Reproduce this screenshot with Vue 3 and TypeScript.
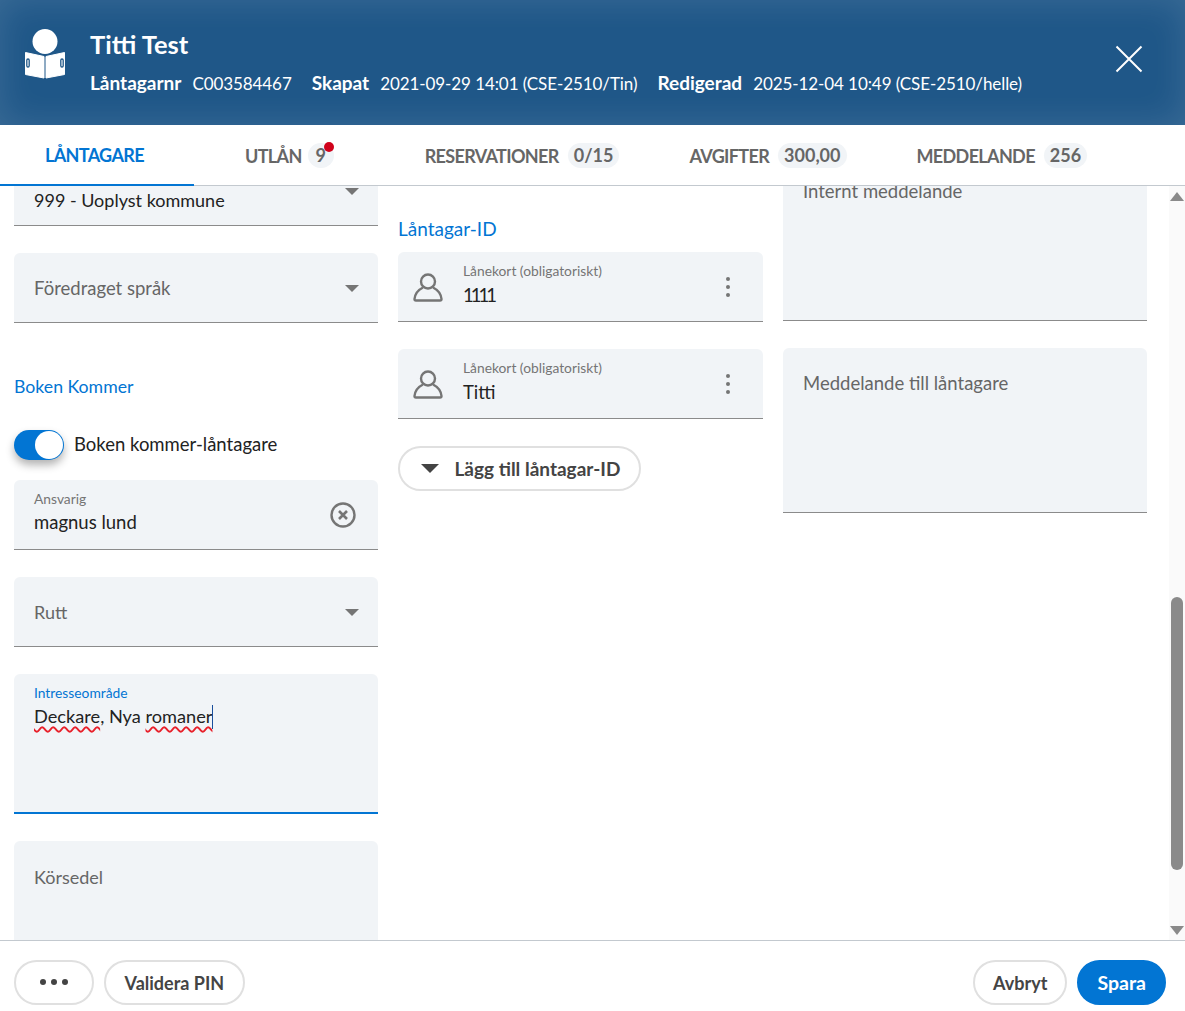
<template>
  <div class="page">
    <header class="top">
      <svg class="reader" width="44" height="50" viewBox="0 0 44 50">
        <circle cx="21" cy="12.500" r="12.500" fill="#fff" />
        <path d="M1.500 23.500 L20 27.500 V49 L1.500 45.500 Z M40.500 23.500 L22 27.500 V49 L40.500 45.500 Z" fill="#fff" stroke="#fff" stroke-width="1" stroke-linejoin="round" />
        <rect x="2.800" y="30" width="2.400" height="8" rx="1.200" fill="none" stroke="#1f5788" stroke-width="1.300" />
        <rect x="36.800" y="30" width="2.400" height="8" rx="1.200" fill="none" stroke="#1f5788" stroke-width="1.300" />
      </svg>
      <div class="who">
        <div class="name">Titti Test</div>
        <div class="meta">
          <template v-for="m in meta" :key="m.label">
            <b>{{ m.label }}</b><span>{{ m.value }}</span>
          </template>
        </div>
      </div>
      <svg class="close" width="28" height="28" viewBox="0 0 28 28">
        <path d="M1.500 1.500 L26.500 26.500 M26.500 1.500 L1.500 26.500" stroke="#fff" stroke-width="2" fill="none" />
      </svg>
    </header>

    <nav class="tabs">
      <div v-for="t in tabs" :key="t.label" class="tab" :class="t.cls">
        <span>{{ t.label }}</span>
        <span v-if="t.badge" class="badge">
          {{ t.badge }}<i v-if="t.dot" class="dot"></i>
        </span>
      </div>
    </nav>

    <main class="body">
      <div class="columns">
        <section class="col">
          <div class="field select">
            <span class="value first">999 - Uoplyst kommune</span>
            <i class="arrow"></i>
          </div>
          <div class="field select gap">
            <span class="ph">Föredraget språk</span>
            <i class="arrow"></i>
          </div>
          <h3 class="head boken">Boken Kommer</h3>
          <div class="switch-row">
            <span class="switch"><i></i></span>
            <span class="switch-label">Boken kommer-låntagare</span>
          </div>
          <div class="field labelled">
            <label>Ansvarig</label>
            <span class="value">magnus lund</span>
            <svg class="clear" width="28" height="28" viewBox="0 0 28 28">
              <circle cx="14" cy="14" r="11.500" fill="none" stroke="#757575" stroke-width="2.400" />
              <path d="M10 10 L18 18 M18 10 L10 18" stroke="#757575" stroke-width="2.600" fill="none" />
            </svg>
          </div>
          <div class="field select gap">
            <span class="ph short">Rutt</span>
            <i class="arrow"></i>
          </div>
          <div class="field labelled area gap focus">
            <label>Intresseområde</label>
            <span class="value"><u>Deckare</u>, Nya <u>romaner</u><i class="caret"></i></span>
          </div>
          <div class="field labelled area gap last">
            <span class="ph korsedel short">Körsedel</span>
          </div>
        </section>

        <section class="col">
          <h3 class="head idhead">Låntagar-ID</h3>
          <div v-for="(c, i) in cards" :key="c.value" class="field card" :class="{ gap: i > 0 }">
            <svg width="30" height="30" viewBox="0 0 30 30">
              <circle cx="15" cy="9.500" r="7" fill="none" stroke="#757575" stroke-width="2.400" />
              <path d="M10 15.500 C5 18 2 22 1.500 27 C1.500 28 2 28.500 3 28.500 H27 C28 28.500 28.500 28 28.500 27 C28 22 25 18 20 15.500" fill="none" stroke="#757575" stroke-width="2.400" />
            </svg>
            <div class="card-text">
              <label>Lånekort (obligatoriskt)</label>
              <span class="value" :class="c.cls">{{ c.value }}</span>
            </div>
            <svg class="more" width="6" height="22" viewBox="0 0 6 22">
              <circle cx="3" cy="3" r="2" fill="#757575" />
              <circle cx="3" cy="11" r="2" fill="#757575" />
              <circle cx="3" cy="19" r="2" fill="#757575" />
            </svg>
          </div>
          <button class="pill add"><i class="arrow dark"></i>Lägg till låntagar-ID</button>
        </section>

        <section class="col">
          <div class="field msg"><span class="ph">Internt meddelande</span></div>
          <div class="field msg gap"><span class="ph">Meddelande till låntagare</span></div>
        </section>
      </div>

      <div class="scrollbar">
        <i class="up"></i>
        <i class="thumb"></i>
        <i class="down"></i>
      </div>
    </main>

    <footer class="foot">
      <button class="pill dots"><i></i><i></i><i></i></button>
      <button class="pill">Validera PIN</button>
      <button class="pill right">Avbryt</button>
      <button class="pill save">Spara</button>
    </footer>
  </div>
</template>

<script setup lang="ts">
const meta = [
  { label: 'Låntagarnr', value: 'C003584467' },
  { label: 'Skapat', value: '2021-09-29 14:01 (CSE-2510/Tin)' },
  { label: 'Redigerad', value: '2025-12-04 10:49 (CSE-2510/helle)' },
];

const tabs = [
  { label: 'LÅNTAGARE', cls: 'active' },
  { label: 'UTLÅN', badge: '9', dot: true, cls: 'loans' },
  { label: 'RESERVATIONER', badge: '0/15' },
  { label: 'AVGIFTER', badge: '300,00' },
  { label: 'MEDDELANDE', badge: '256' },
];

const cards = [
  { value: '1111', cls: 'digits' },
  { value: 'Titti', cls: '' },
];
</script>

<style>
body {
  margin: 0;
}
</style>

<style scoped>
.page {
  height: 1011px;
  display: flex;
  flex-direction: column;
  overflow: hidden;
  background: #fff;
  font-family: Lato, "Liberation Sans", sans-serif;
  color: #222;
}
.top {
  height: 125px;
  flex: none;
  box-sizing: border-box;
  padding: 29px 42px 0 24px;
  display: flex;
  align-items: flex-start;
  background: #1f5788;
  box-shadow: inset 0 0 36px rgba(255, 255, 255, 0.13);
  color: #fff;
}
.reader {
  margin-right: 22px;
  flex: none;
}
.who {
  flex: 1;
}
.name {
  font-size: 25.500px;
  line-height: 30px;
  font-weight: 700;
}
.meta {
  margin-top: 12px;
  font-size: 17px;
  line-height: 24px;
  letter-spacing: -0.08px;
  white-space: nowrap;
}
.meta b {
  font-size: 19px;
  letter-spacing: 0;
  margin-right: 11px;
}
.meta span {
  margin-right: 20px;
}
.close {
  margin-top: 16px;
}
.tabs {
  height: 61px;
  flex: none;
  box-sizing: border-box;
  display: flex;
  border-bottom: 1px solid #c3c9cf;
  font-size: 18px;
  letter-spacing: -0.65px;
  font-weight: 700;
  color: #666;
}
.tab {
  display: flex;
  align-items: center;
  gap: 9px;
  padding: 0 35px;
  margin-bottom: -1px;
  box-sizing: border-box;
  white-space: nowrap;
}
.tab.active {
  width: 194px;
  padding: 0 0 0 45px;
  color: #0275d3;
  border-bottom: 2px solid #0275d3;
}
.tab.loans {
  gap: 6px;
  padding: 0 56px 0 51px;
}
.badge {
  position: relative;
  height: 25px;
  min-width: 26px;
  box-sizing: border-box;
  padding: 0 6px;
  border-radius: 13px;
  background: #f1f4f7;
  font-size: 18px;
  letter-spacing: 0;
  text-align: center;
  line-height: 25px;
}
.dot {
  position: absolute;
  top: -1px;
  right: 0;
  width: 10px;
  height: 10px;
  border-radius: 50%;
  background: #d0021b;
}
.body {
  flex: 1;
  min-height: 0;
  position: relative;
  overflow: hidden;
}
.columns {
  margin-top: -30px;
  padding: 0 38px 0 14px;
  display: grid;
  grid-template-columns: 364px 365px 364px;
  column-gap: 20px;
}
.col {
  display: flex;
  flex-direction: column;
  align-items: stretch;
  min-width: 0;
}
.field {
  position: relative;
  box-sizing: border-box;
  height: 70px;
  flex: none;
  background: #f1f4f7;
  border-bottom: 1px solid #8b8b8b;
  border-radius: 6px 6px 0 0;
  padding: 0 20px;
  font-size: 18.500px;
}
.gap {
  margin-top: 27px;
}
.select {
  display: flex;
  align-items: center;
  justify-content: space-between;
  padding-right: 19px;
}
.value {
  color: #222;
  line-height: 22px;
  white-space: nowrap;
}
.value.first {
  margin-top: 18px;
  font-size: 18px;
}
.value.digits {
  letter-spacing: -3px;
}
.ph {
  color: #666;
  line-height: 22px;
}
.ph.short {
  font-size: 18px;
}
.arrow {
  width: 0;
  height: 0;
  margin-top: 1px;
  border-left: 7px solid transparent;
  border-right: 7px solid transparent;
  border-top: 7px solid #757575;
}
.arrow.dark {
  border-left-width: 9px;
  border-right-width: 9px;
  border-top: 9px solid #444;
  margin: 0 16px 0 2px;
}
.head {
  margin: 0;
  font-size: 17.700px;
  line-height: 22px;
  font-weight: 400;
  color: #0275d3;
}
.boken {
  margin-top: 53px;
}
.idhead {
  margin: 62px 0 12px;
  font-size: 19px;
}
.switch-row {
  margin-top: 32px;
  height: 30px;
  display: flex;
  align-items: center;
  gap: 10px;
  font-size: 18.500px;
}
.switch-label {
  padding-bottom: 2px;
}
.switch {
  position: relative;
  width: 50px;
  height: 30px;
  border-radius: 15px;
  background: #0275d3;
  box-shadow: 0 5px 9px rgba(0, 0, 0, 0.3);
}
.switch i {
  position: absolute;
  top: 1px;
  right: 1px;
  width: 28px;
  height: 28px;
  border-radius: 50%;
  background: #fff;
}
.labelled {
  margin-top: 20px;
  padding-top: 10px;
  display: flex;
  flex-direction: column;
}
.labelled.gap {
  margin-top: 27px;
}
label {
  font-size: 13.800px;
  line-height: 18px;
  color: #757575;
}
.labelled .value {
  margin-top: 3px;
}
.clear {
  position: absolute;
  right: 21px;
  top: 21px;
}
.area {
  height: 140px;
}
.focus {
  border-bottom: 2px solid #0275d3;
}
.focus label {
  color: #0275d3;
}
.focus .value {
  font-size: 18.200px;
}
.focus u {
  text-decoration: underline wavy #e8202a 1.500px;
  text-underline-offset: 3px;
}
.caret {
  display: inline-block;
  width: 1px;
  height: 24px;
  background: #1a4f9c;
  vertical-align: -6px;
}
.last {
  height: 150px;
  border-bottom: 0;
}
.korsedel {
  margin-top: 15px;
}
.card {
  display: flex;
  align-items: center;
  padding: 0 32px 0 15px;
}
.card-text {
  flex: 1;
  margin-left: 20px;
  padding-bottom: 5px;
  display: flex;
  flex-direction: column;
}
.card-text .value {
  margin-top: 4px;
}
.msg {
  height: 165px;
  padding-top: 24px;
}
.pill {
  height: 45px;
  box-sizing: border-box;
  padding: 0 18.500px;
  border: 2px solid #e0e0e0;
  border-radius: 23px;
  background: #fff;
  font-family: inherit;
  font-size: 18px;
  font-weight: 700;
  color: #444;
  display: inline-flex;
  align-items: center;
}
.add {
  margin-top: 27px;
  align-self: flex-start;
  width: 243px;
  font-size: 19px;
}
.scrollbar {
  position: absolute;
  top: 0;
  right: 0;
  bottom: 0;
  width: 16px;
  background: #fafafa;
}
.scrollbar i {
  position: absolute;
}
.up,
.down {
  left: 1px;
  width: 0;
  height: 0;
  border-left: 7px solid transparent;
  border-right: 7px solid transparent;
}
.up {
  top: 6px;
  border-bottom: 9px solid #8a8a8a;
}
.down {
  bottom: 5px;
  border-top: 9px solid #8a8a8a;
}
.thumb {
  top: 411px;
  left: 2px;
  width: 12px;
  height: 273px;
  border-radius: 6px;
  background: #8a8a8a;
}
.foot {
  height: 71px;
  flex: none;
  box-sizing: border-box;
  border-top: 1px solid #c3c9cf;
  padding: 19px 19px 0 14px;
  display: flex;
  align-items: flex-start;
  gap: 10px;
}
.dots {
  width: 80px;
  justify-content: center;
  gap: 5px;
  padding-bottom: 2px;
}
.dots i {
  width: 6px;
  height: 6px;
  border-radius: 50%;
  background: #444;
}
.right {
  margin-left: auto;
  padding: 0 18px;
}
.save {
  padding: 0 18px;
  font-size: 19.500px;
  background: #0275d3;
  border-color: #0275d3;
  color: #fff;
}
</style>
